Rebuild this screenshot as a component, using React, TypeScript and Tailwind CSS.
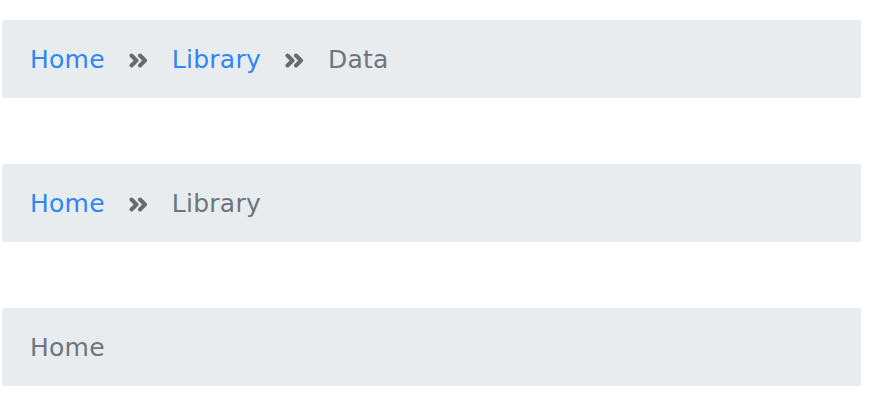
type Crumb = { label: string; href?: string };

const trails: Crumb[][] = [
  [{ label: "Home", href: "#" }, { label: "Library", href: "#" }, { label: "Data" }],
  [{ label: "Home", href: "#" }, { label: "Library" }],
  [{ label: "Home" }],
];

function Chevrons() {
  return (
    <svg viewBox="0 0 19 15" className="mx-[24px] h-[15px] w-[19px] text-[#66696e]" aria-hidden>
      <g fill="none" stroke="currentColor" strokeWidth="4" strokeLinecap="round" strokeLinejoin="round">
        <polyline points="2.5,2.5 7.5,7.5 2.5,12.5" />
        <polyline points="11,2.5 16,7.5 11,12.5" />
      </g>
    </svg>
  );
}

function Breadcrumb({ items }: { items: Crumb[] }) {
  return (
    <nav className="flex h-[78px] w-[859px] items-center rounded-[2px] bg-[#e9ecef] pl-[28px] pt-[2px]">
      <ol className="flex items-center">
        {items.map((item, i) => (
          <li key={item.label} className="flex items-center">
            {i > 0 && <Chevrons />}
            {item.href ? (
              <a href={item.href} className="text-[#2f86f4]">
                {item.label}
              </a>
            ) : (
              <span className="text-[#6c757d]">{item.label}</span>
            )}
          </li>
        ))}
      </ol>
    </nav>
  );
}

export default function App() {
  return (
    <div
      className="flex min-h-screen flex-col gap-[66px] bg-white px-[2px] pt-[20px] text-[25px] tracking-[0.01em]"
      style={{ fontFamily: "'DejaVu Sans', Inter, sans-serif" }}
    >
      {trails.map((t, i) => (
        <Breadcrumb key={i} items={t} />
      ))}
    </div>
  );
}
